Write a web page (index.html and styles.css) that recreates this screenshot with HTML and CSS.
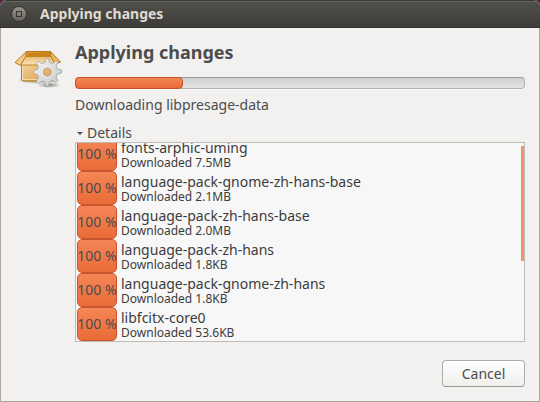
FILE: index.html
```html
<!DOCTYPE html>
<html lang="en">
<head>
<meta charset="utf-8">
<title>Applying changes</title>
<link rel="stylesheet" href="styles.css">
</head>
<body>
<div class="window">
  <header class="titlebar">
    <button class="window-button" type="button" aria-label="Maximize">
      <svg width="16" height="16" viewBox="0 0 16 16" aria-hidden="true">
        <defs><linearGradient id="knob" x1="0" y1="0" x2="0" y2="1"><stop offset="0" stop-color="#98968e"/><stop offset="1" stop-color="#65635c"/></linearGradient></defs>
        <circle cx="8" cy="8" r="7.5" fill="url(#knob)" stroke="#35342f"/>
        <rect x="5.5" y="5.5" width="5" height="5" fill="none" stroke="#36352f"/>
      </svg>
    </button>
    <span class="title">Applying changes</span>
  </header>
  <main class="content">
    <svg class="package" width="48" height="48" viewBox="0 0 48 48" aria-hidden="true">
      <defs>
        <linearGradient id="front" x1="0" y1="0" x2="1" y2="1"><stop offset="0" stop-color="#f5d8a2"/><stop offset="1" stop-color="#db9a43"/></linearGradient>
        <linearGradient id="inside" x1="0" y1="0" x2="1" y2="0"><stop offset="0" stop-color="#e3ac56"/><stop offset="1" stop-color="#c47a10"/></linearGradient>
        <linearGradient id="flap" x1="0" y1="0" x2="0" y2="1"><stop offset="0" stop-color="#e9b970"/><stop offset="1" stop-color="#f9e5bd"/></linearGradient>
        <linearGradient id="metal" x1="0" y1="0" x2="1" y2="1"><stop offset="0" stop-color="#f7f7f7"/><stop offset="1" stop-color="#c4c5c3"/></linearGradient>
        <radialGradient id="shade"><stop offset="0" stop-color="#000" stop-opacity=".45"/><stop offset="1" stop-color="#000" stop-opacity="0"/></radialGradient>
      </defs>
      <ellipse cx="22" cy="37" rx="19" ry="4" fill="url(#shade)"/>
      <ellipse cx="35" cy="42" rx="12" ry="3" fill="url(#shade)"/>
      <path d="M7.5 18H41.5V38H9L7.5 36.500Z" fill="url(#front)" stroke="#b87817"/>
      <path d="M8.500 19V36.500H25" fill="none" stroke="#fae6bd" stroke-opacity=".8"/>
      <path d="M12.500 8.500H36.500L41 18H8Z" fill="url(#inside)" stroke="#b87817"/>
      <path d="M14 10H35.500L37 13H13Z" fill="#c98318"/>
      <path d="M10 13.500H38L41.500 22H7Z" fill="url(#flap)" stroke="#c28325"/>
      <path d="M12.500 8.500L1 19.500L6.500 22.500L11.500 13.500Z" fill="#f2cc8a" stroke="#b87817"/>
      <path d="M36.500 8.500L46.500 19L40.500 21.500L36.500 12Z" fill="#edb65d" stroke="#b87817"/>
      <path fill-rule="evenodd" d="M31 19.500L32 15.500H34.500L35.500 19.500L38.500 20.500L42 17.500L44 19.500L42 23L43.500 26L47.500 27V30L43.500 31L42 34L44 37.500L42 39.500L38.500 37.500L35.500 39L34.500 43.500H32L31 39L28 38L24.500 40.500L22.500 38.500L24.500 34.500L23.500 31.500L19.500 30.500V28L23.500 26.500L24.500 23.500L22.500 20.500L24.500 18.500L28 20.500ZM37.500 29A4.200 4.200 0 1 0 29 29A4.200 4.200 0 1 0 37.500 29Z" fill="url(#metal)" stroke="#a0a29e" stroke-width=".8"/>
      <circle cx="33.200" cy="29" r="5.200" fill="none" stroke="#fff" stroke-opacity=".55"/>
    </svg>
    <section class="main">
      <h1>Applying changes</h1>
      <div class="progress" role="progressbar" aria-label="Overall progress" aria-valuenow="24" aria-valuemin="0" aria-valuemax="100"><div class="progress-fill" style="width:24%"></div></div>
      <p class="status">Downloading libpresage-data</p>
      <button class="expander" type="button" aria-expanded="true" aria-controls="downloads"><span class="arrow"></span>Details</button>
      <div class="downloads" id="downloads">
        <ul class="rows">
          <li class="row"><span class="percent">100 %</span><span class="info"><span class="name">fonts-arphic-uming</span><span class="detail">Downloaded 7.5MB</span></span></li>
          <li class="row"><span class="percent">100 %</span><span class="info"><span class="name">language-pack-gnome-zh-hans-base</span><span class="detail">Downloaded 2.1MB</span></span></li>
          <li class="row"><span class="percent">100 %</span><span class="info"><span class="name">language-pack-zh-hans-base</span><span class="detail">Downloaded 2.0MB</span></span></li>
          <li class="row"><span class="percent">100 %</span><span class="info"><span class="name">language-pack-zh-hans</span><span class="detail">Downloaded 1.8KB</span></span></li>
          <li class="row"><span class="percent">100 %</span><span class="info"><span class="name">language-pack-gnome-zh-hans</span><span class="detail">Downloaded 1.8KB</span></span></li>
          <li class="row"><span class="percent">100 %</span><span class="info"><span class="name">libfcitx-core0</span><span class="detail">Downloaded 53.6KB</span></span></li>
        </ul>
        <div class="scrollbar"></div>
      </div>
      <footer class="actions"><button class="cancel" type="button">Cancel</button></footer>
    </section>
  </main>
</div>
</body>
</html>
```
FILE: styles.css
```css
* { box-sizing: border-box; }

body {
  margin: 0;
  background: #5e1a45;
  color: #4c4c4c;
  font: 14px/18px "Noto Sans", "Open Sans", sans-serif;
}

button { font: inherit; color: inherit; }

.window {
  display: flex;
  flex-direction: column;
  min-height: 100vh;
  border-radius: 6px 6px 0 0;
  overflow: hidden;
  background: #f2f1f0;
}

.titlebar {
  display: flex;
  align-items: center;
  gap: 13px;
  height: 28px;
  padding: 0 11px;
  border-top: 1px solid #3a3935;
  border-bottom: 1px solid #33322e;
  box-shadow: inset 0 1px #65635d;
  background: linear-gradient(#52504b, #3d3c38);
  color: #dfdbd2;
  font-weight: bold;
}

.window-button {
  width: 16px;
  height: 16px;
  padding: 0;
  border: 0;
  background: none;
}

.window-button svg { display: block; }

.content {
  display: flex;
  flex: 1;
  gap: 13px;
  padding: 12px 14px 12px 13px;
  border: 1px solid #aaa6a1;
  border-top: 0;
}

.package {
  flex: none;
  margin-top: 3px;
}

.main {
  display: flex;
  flex: 1;
  flex-direction: column;
  min-width: 0;
}

h1 {
  margin: 0 0 13px;
  font-size: 18px;
  line-height: 24px;
}

.progress {
  height: 12px;
  border: 1px solid #b4b2af;
  border-top-color: #999794;
  border-radius: 4px;
  background: linear-gradient(#d0d0d0, #e4e4e4);
  box-shadow: 0 1px #fafafa;
}

.progress-fill {
  height: 12px;
  margin: -1px;
  border: 1px solid #c9532b;
  border-radius: 4px;
  background: linear-gradient(#f58656, #e96b38);
}

.status { margin: 7px 0 10px; }

.expander {
  display: flex;
  align-items: center;
  gap: 4px;
  align-self: flex-start;
  padding: 0 2px;
  border: 0;
  background: none;
}

.arrow {
  border: 3px solid transparent;
  border-top-color: #4c4c4c;
  border-bottom: 0;
}

.downloads {
  display: flex;
  height: 200px;
  border: 1px solid #bfbcb8;
  background: #f7f7f7;
  color: #3c3c3c;
  overflow: hidden;
}

.rows {
  display: flex;
  flex: 1;
  flex-direction: column;
  justify-content: flex-end;
  margin: 0;
  padding: 0 0 0 1px;
  list-style: none;
}

.row {
  display: flex;
  flex: none;
  gap: 4px;
  height: 34px;
}

.percent {
  display: flex;
  align-items: center;
  justify-content: center;
  width: 40px;
  border: 1px solid #c9532b;
  border-radius: 5px;
  background: linear-gradient(#f58656, #e96b38);
  color: #4c4c4c;
  white-space: nowrap;
}

.info {
  display: flex;
  flex-direction: column;
}

.name { line-height: 22px; }

.detail {
  font-size: 12px;
  line-height: 8px;
}

.scrollbar {
  width: 3px;
  height: 115px;
  margin-top: 3px;
  background: #f39169;
}

.actions {
  display: flex;
  justify-content: flex-end;
  margin-top: 18px;
}

.cancel {
  width: 83px;
  height: 27px;
  padding: 0;
  border: 1px solid #b0aeab;
  border-bottom-color: #979592;
  border-radius: 4px;
  background: linear-gradient(#ffffff, #f0efee);
}
```
